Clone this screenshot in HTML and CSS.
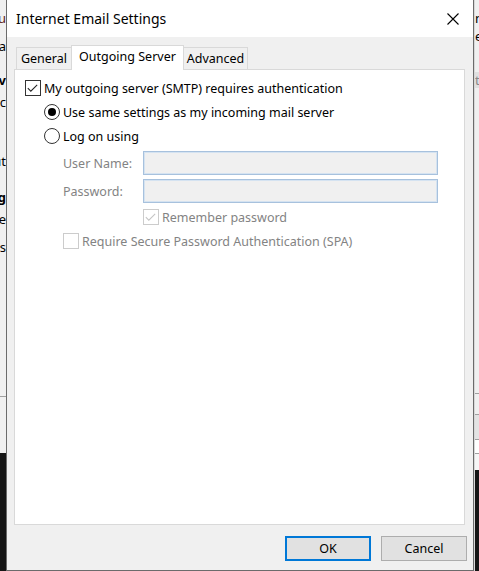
FILE: index.html
```html
<!DOCTYPE html>
<html>
<head>
<meta charset="utf-8">
<link rel="stylesheet" href="styles.css">
</head>
<body>
<div class="bg bg-left">
  <div class="frag f1">u</div>
  <div class="frag f2">na</div>
  <div class="frag f3">rv</div>
  <div class="frag f4">c</div>
  <div class="frag f5">ut</div>
  <div class="frag f6">g</div>
  <div class="frag f7">e</div>
  <div class="frag f8">s</div>
  <div class="frag-line"></div>
  <div class="frag-dark"></div>
</div>
<div class="dialog">
  <div class="titlebar">
    <span class="title">Internet Email Settings</span>
    <svg class="close" width="12" height="12" viewBox="0 0 12 12"><path d="M0.5 0.5 L11.5 11.5 M11.5 0.5 L0.5 11.5" stroke="#000" stroke-width="1.1" fill="none"/></svg>
  </div>
  <div class="client">
    <div class="tabs">
      <div class="tab t-general">General</div>
      <div class="tab active">Outgoing Server</div>
      <div class="tab t-adv">Advanced</div>
    </div>
    <div class="panel">
      <div class="row">
        <span class="cb"><svg width="16" height="16" viewBox="0 0 16 16"><path d="M3 8.2 L6.2 11.4 L13 4.6" stroke="#222" stroke-width="1.1" fill="none"/></svg></span>
        <span>My outgoing server (SMTP) requires authentication</span>
      </div>
      <div class="group">
        <div class="row">
          <span class="radio on"><span class="dot"></span></span>
          <span>Use same settings as my incoming mail server</span>
        </div>
        <div class="row">
          <span class="radio"></span>
          <span>Log on using</span>
        </div>
        <div class="sub">
          <div class="field">
            <span class="lbl">User Name:</span>
            <span class="input"></span>
          </div>
          <div class="field">
            <span class="lbl">Password:</span>
            <span class="input"></span>
          </div>
          <div class="row disabled remember">
            <span class="cb dis"><svg width="16" height="16" viewBox="0 0 16 16"><path d="M3 8.2 L6.2 11.4 L13 4.6" stroke="#c4c4c4" stroke-width="1.1" fill="none"/></svg></span>
            <span>Remember password</span>
          </div>
          <div class="row disabled">
            <span class="cb dis"></span>
            <span>Require Secure Password Authentication (SPA)</span>
          </div>
        </div>
      </div>
    </div>
    <div class="buttons">
      <div class="btn default">OK</div>
      <div class="btn">Cancel</div>
    </div>
  </div>
</div>
<div class="bg bg-right">
  <div class="frag r1">n</div>
  <div class="frag r2">e</div>
  <div class="rbox">t</div>
  <div class="rline l1"></div>
  <div class="rline l2"></div>
  <div class="rband"></div>
  <div class="rline"></div>
  <div class="rspace"></div>
  <div class="rline"></div>
  <div class="rspace2"></div>
  <div class="frag-dark"></div>
</div>
</body>
</html>
```

FILE: styles.css
```css
html, body {
  margin: 0;
  padding: 0;
}
body {
  width: 479px;
  height: 571px;
  overflow: hidden;
  display: flex;
  background: #f0f0f0;
  font-family: "Noto Sans", "Open Sans", sans-serif;
  font-size: 12.5px;
  color: #000;
}
.bg {
  display: flex;
  flex-direction: column;
  overflow: hidden;
  background: #f0f0f0;
  font-family: "Noto Sans", sans-serif;
  font-size: 13px;
  line-height: 16px;
  color: #000;
}
.bg-left {
  width: 6px;
  align-items: flex-end;
}
.bg-right {
  width: 4px;
  border-left: 1px solid #d8d8d8;
}
.frag { white-space: nowrap; }
.f1 { margin-top: 10px; color: #5a1a1a; }
.f2 { margin-top: 12px; }
.f3 { margin-top: 18px; font-weight: bold; }
.f4 { margin-top: 6px; }
.f5 { margin-top: 43px; }
.f6 { margin-top: 20px; font-weight: bold; }
.f7 { margin-top: 6px; }
.f8 { margin-top: 12px; }
.frag-line {
  margin-top: 141px;
  height: 1px;
  width: 6px;
  background: #a0a0a0;
  flex-shrink: 0;
}
.frag-dark {
  flex: 1;
  margin-top: 56px;
  background: #151515;
  width: 100%;
}
.r1 { margin-top: 10px; }
.r2 { margin-top: 2px; }
.rbox {
  margin-top: 28px;
  background: #e0e0e0;
  color: #888;
  height: 16px;
}
.rline {
  height: 1px;
  background: #a0a0a0;
  flex-shrink: 0;
}
.l1 { margin-top: 305px; }
.l2 { margin-top: 20px; }
.rband {
  height: 24px;
  background: #e3e3e3;
  flex-shrink: 0;
}
.rspace { height: 13px; flex-shrink: 0; background: #fff; }
.rspace2 { height: 16px; flex-shrink: 0; background: #f6f6f6; }
.bg-right .frag-dark { margin-top: 0; }

.dialog {
  width: 467px;
  height: 570px;
  border-left: 1px solid #6b6b6b;
  border-right: 1px solid #6b6b6b;
  border-bottom: 1px solid #6b6b6b;
  display: flex;
  flex-direction: column;
  background: #f0f0f0;
}
.titlebar {
  height: 37px;
  background: #fff;
  display: flex;
  align-items: center;
  justify-content: space-between;
  padding: 0 14px 0 9px;
  flex-shrink: 0;
}
.title {
  font-size: 14px;
  margin-top: -1px;
}

.client {
  flex: 1;
  display: flex;
  flex-direction: column;
  padding: 8px 6px 0 7px;
}
.tabs {
  display: flex;
  align-items: flex-end;
  padding-left: 2px;
  height: 24px;
}
.tab {
  box-sizing: border-box;
  height: 22px;
  border: 1px solid #d9d9d9;
  border-bottom: none;
  background: #f0f0f0;
  display: flex;
  align-items: center;
  justify-content: center;
  line-height: 1;
  padding-top: 1px;
}
.t-general { width: 56px; }
.t-adv { width: 65px; }
.tab + .tab { margin-left: -1px; }
.tab.active {
  width: 113px;
  height: 25px;
  background: #fff;
  margin-bottom: -1px;
  position: relative;
  z-index: 1;
  padding: 0 0 2px 0;
}
.panel {
  width: 439px;
  height: 448px;
  border: 1px solid #d9d9d9;
  background: #fff;
  padding: 6px 0 0 10px;
  margin-right: auto;
}
.row {
  display: flex;
  align-items: center;
  height: 24px;
  gap: 3px;
  white-space: nowrap;
}
.group { margin-left: 19px; }
.sub { margin-left: 19px; }
.cb {
  width: 14px;
  height: 14px;
  border: 1px solid #333;
  background: #fff;
  display: inline-flex;
  flex-shrink: 0;
}
.cb svg { margin: -1px 0 0 -1px; }
.cb.dis { border-color: #cccccc; }
.radio {
  width: 14px;
  height: 14px;
  border: 1px solid #333;
  border-radius: 50%;
  display: inline-flex;
  align-items: center;
  justify-content: center;
  flex-shrink: 0;
}
.radio .dot {
  width: 8px;
  height: 8px;
  border-radius: 50%;
  background: #000;
}
.field {
  display: flex;
  align-items: center;
  margin-top: 4px;
}
.field:first-child { margin-top: 3px; }
.lbl {
  width: 80px;
  color: #838383;
}
.input {
  width: 291px;
  height: 20px;
  border: 1px solid #a7c1dd;
  box-shadow: inset 0 0 0 1px #d5e3f1;
  background: #f0f0f0;
  padding: 1px;
}
.disabled { color: #838383; }
.remember { margin-left: 80px; margin-top: 2px; }
.buttons {
  display: flex;
  justify-content: flex-end;
  gap: 10px;
  margin-top: 11px;
}
.btn {
  width: 84px;
  height: 23px;
  border: 1px solid #adadad;
  background: #e1e1e1;
  display: flex;
  align-items: center;
  justify-content: center;
}
.btn.default {
  border: 2px solid #0078d7;
  width: 82px;
  height: 21px;
}
```
